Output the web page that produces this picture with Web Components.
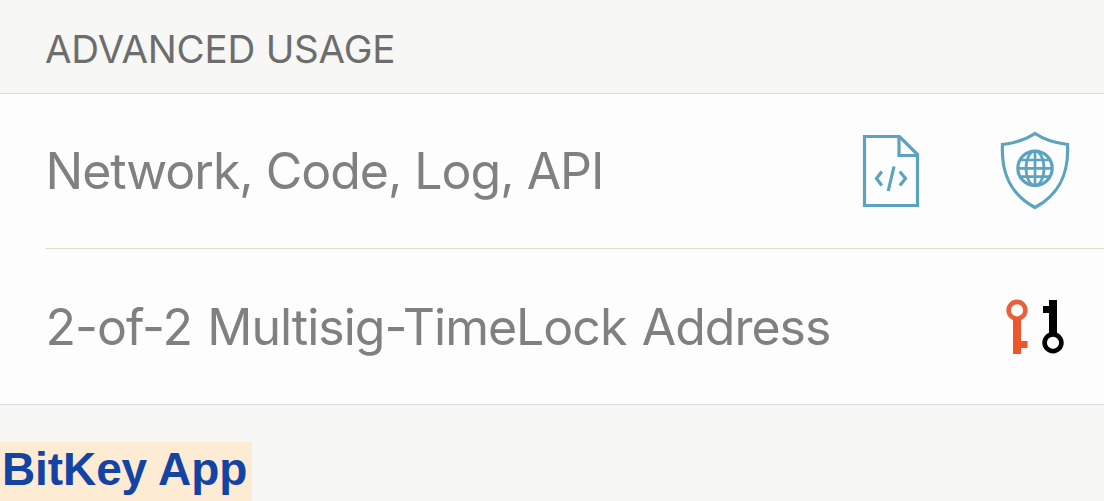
<!DOCTYPE html>
<html lang="en">
<head>
<meta charset="utf-8">
<title>BitKey App</title>
<style>
  body {
    margin: 0;
    height: 501px;
    overflow: hidden;
    background: #f7f7f5;
    font-family: Inter, "Liberation Sans", sans-serif;
  }
</style>
</head>
<body>
<settings-page>
  <settings-section>
    <span slot="title">ADVANCED USAGE</span>
    <settings-row style="--row-height: 154px; --row-spacing: -1.02px">
      Network, Code, Log, API
      <app-icon slot="icons" name="code"></app-icon>
      <app-icon slot="icons" name="shield"></app-icon>
    </settings-row>
    <settings-row style="--row-height: 155px; --row-spacing: -1px; --row-word-spacing: 2.3px">
      2-of-2 Multisig-TimeLock Address
      <app-icon slot="icons" name="keys"></app-icon>
    </settings-row>
  </settings-section>
  <app-badge slot="footer">BitKey App</app-badge>
</settings-page>

<script>
const icons = {
  code: `
    <svg width="58" height="74" viewBox="0 0 58 74" fill="none" stroke="#5ba3bf" stroke-width="3.2">
      <path d="M2.5 2.5H37.5L55.5 20.5V71.5H2.5Z"/>
      <path d="M37 2.5V21.5H55.5"/>
      <path d="M19.8 37.5L14.5 44.5L19.8 51.5M37.8 37.5L43.5 44.5L37.8 51.5M32 32.5L26.2 57"/>
    </svg>`,
  shield: `
    <svg width="70" height="81" viewBox="0 0 70 81" fill="none" stroke="#5ba3bf" stroke-width="3.2">
      <path d="M35 2.5C26 8.5 15 12 2.5 13.5C1 42 10 63 35 76.5C60 63 69 42 67.5 13.5C55 12 44 8.5 35 2.5Z"/>
      <circle cx="35" cy="37.3" r="17.2"/>
      <ellipse cx="35" cy="37.3" rx="9" ry="17.2" stroke-width="2.7"/>
      <path d="M35 20V54.5M18 37.3H52M20 29H50M20 45.6H50" stroke-width="2.7"/>
    </svg>`,
  keys: `
    <svg width="60" height="56" viewBox="0 0 60 56">
      <g fill="none" stroke="#e9603a" stroke-width="4.6">
        <circle cx="12" cy="11.3" r="8.4"/>
      </g>
      <path d="M8 19H16V42H22.5V49H16V55H8Z" fill="#f0552b"/>
      <g fill="none" stroke="#000" stroke-width="4.6">
        <circle cx="48" cy="43.8" r="8.4"/>
      </g>
      <path d="M44 1H52V36H44V14H38V7H44Z" fill="#000"/>
    </svg>`
};

class AppIcon extends HTMLElement {
  constructor() {
    super();
    this.attachShadow({ mode: 'open' });
  }

  connectedCallback() {
    this.shadowRoot.innerHTML = `
      <style>
        :host { display: block; flex: none; }
        :host([name="keys"]) { margin-right: 5px; }
        svg { display: block; }
      </style>
      ${icons[this.getAttribute('name')]}
    `;
  }
}

class SettingsRow extends HTMLElement {
  constructor() {
    super();
    this.attachShadow({ mode: 'open' }).innerHTML = `
      <style>
        :host {
          display: block;
          padding-left: 45px;
          background: #fdfdfd;
        }

        .row {
          display: flex;
          align-items: center;
          height: var(--row-height);
          border-bottom: 1px solid #dfdfd0;
        }

        :host(:last-of-type) {
          border-bottom: 1px solid #dcdcda;
        }

        :host(:last-of-type) .row {
          border-bottom: 0;
        }

        .label {
          flex: 1;
          padding-left: 0.5px;
          color: #808080;
          font-size: 50px;
          letter-spacing: var(--row-spacing);
          word-spacing: var(--row-word-spacing, 0);
          white-space: nowrap;
        }

        .icons {
          display: flex;
          align-items: center;
          gap: 80px;
          padding-right: 34px;
        }
      </style>
      <div class="row">
        <div class="label"><slot></slot></div>
        <div class="icons"><slot name="icons"></slot></div>
      </div>
    `;
  }
}

class SettingsSection extends HTMLElement {
  constructor() {
    super();
    this.attachShadow({ mode: 'open' }).innerHTML = `
      <style>
        :host { display: block; }

        .title {
          display: flex;
          align-items: center;
          box-sizing: border-box;
          height: 94px;
          padding: 4px 0 0 45px;
          border-bottom: 1px solid #dcdcda;
          color: #6d6d6d;
          font-size: 38.5px;
          letter-spacing: -0.2px;
        }
      </style>
      <div class="title"><slot name="title"></slot></div>
      <slot></slot>
    `;
  }
}

class AppBadge extends HTMLElement {
  constructor() {
    super();
    this.attachShadow({ mode: 'open' }).innerHTML = `
      <style>
        :host {
          display: block;
          box-sizing: border-box;
          width: 252px;
          height: 59px;
          padding-left: 2px;
          background: #fdebd3;
          color: #1344a4;
          font: bold 46px/55px "Liberation Sans", Arial, sans-serif;
          letter-spacing: -0.1px;
          white-space: nowrap;
        }
      </style>
      <slot></slot>
    `;
  }
}

class SettingsPage extends HTMLElement {
  constructor() {
    super();
    this.attachShadow({ mode: 'open' }).innerHTML = `
      <style>
        :host {
          display: flex;
          flex-direction: column;
          justify-content: space-between;
          height: 501px;
        }
      </style>
      <slot></slot>
      <slot name="footer"></slot>
    `;
  }
}

customElements.define('app-icon', AppIcon);
customElements.define('settings-row', SettingsRow);
customElements.define('settings-section', SettingsSection);
customElements.define('app-badge', AppBadge);
customElements.define('settings-page', SettingsPage);
</script>
</body>
</html>
